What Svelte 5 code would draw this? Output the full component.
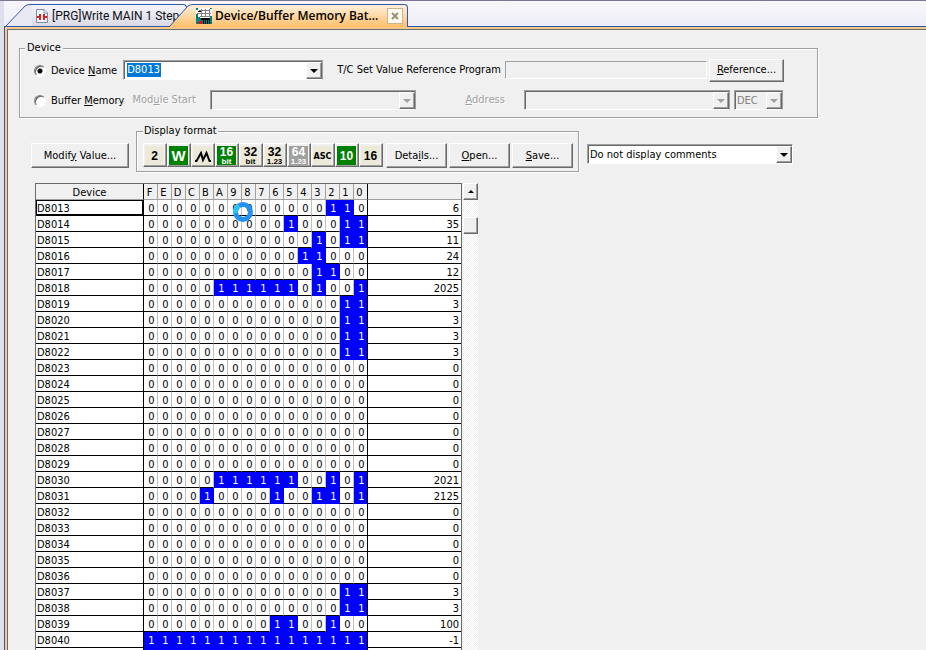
<script>
  const BITS = 'FEDCBA9876543210'.split('');
  const FIRST = 8013;

  const VALUES = [
    6, 35, 11, 24, 12, 2025, 3, 3, 3, 3,
    0, 0, 0, 0, 0, 0, 0, 2021, 2125, 0,
    0, 0, 0, 0, 3, 3, 100, -1,
  ];

  const rows = VALUES.map((value, i) => ({
    name: `D${FIRST + i}`,
    value,
    bits: BITS.map((_, n) => ((value & 0xffff) >> (15 - n)) & 1),
  }));

  const FORMATS = [
    { id: 'bit', top: '2', label: 'Bit' },
    { id: 'word', top: 'W', label: 'Word', on: true },
    { id: 'multi', label: 'Bit and word' },
    { id: 'i16', top: '16', sub: 'bit', label: '16-bit integer', on: true },
    { id: 'i32', top: '32', sub: 'bit', label: '32-bit integer' },
    { id: 'f32', top: '32', sub: '1.23', label: '32-bit real' },
    { id: 'f64', top: '64', sub: '1.23', label: '64-bit real', disabled: true },
    { id: 'asc', top: 'ASC', label: 'ASCII' },
    { id: 'dec', top: '10', label: 'Decimal', on: true },
    { id: 'hex', top: '16', label: 'Hexadecimal' },
  ];

  let target = $state('device');
  let device = $state('D8013');
</script>

<div class="window">
  <nav class="tabs">
    <div class="tab back">
      <svg class="edge" viewBox="0 0 26 22" aria-hidden="true">
        <path d="M0 22L19 2Q21 .5 24 .5H26V22Z" fill="#e9e9f3" />
        <path d="M0 22L19 2Q21 .5 24 .5H26" fill="none" stroke="#2f5aa8" />
      </svg>
      <a class="face" href="#main">
        <svg width="12" height="14" viewBox="0 0 12 14" aria-hidden="true">
          <path d="M.5.5H8L11.500 4V13.500H.5Z" fill="#f2f5fa" stroke="#7d8aa3" />
          <path d="M8 .5V4H11.500" fill="#fff" stroke="#7d8aa3" />
          <path d="M1 8H4M8 8H11M4 5V11M8 5V11" stroke="#d8201c" stroke-width="2" />
        </svg>
        <span>[PRG]Write MAIN 1 Step</span>
      </a>
    </div>
    <div class="tab front">
      <svg class="edge" viewBox="0 0 26 23" aria-hidden="true">
        <defs>
          <linearGradient id="warm" x1="0" y1="0" x2="0" y2="1">
            <stop offset="0" stop-color="#fff0dc" />
            <stop offset="1" stop-color="#ffbf6b" />
          </linearGradient>
        </defs>
        <path d="M0 23L19 2Q21 .5 24 .5H26V23Z" fill="url(#warm)" />
        <path d="M0 23L19 2Q21 .5 24 .5H26" fill="none" stroke="#2f5aa8" />
      </svg>
      <a class="face" href="#batch">
        <svg width="16" height="16" viewBox="0 0 16 16" shape-rendering="crispEdges" aria-hidden="true">
          <rect width="16" height="16" fill="#008080" />
          <path d="M2 0H14V1H16V8H14V10H4V9H2V6H0V2H2Z" fill="#fff" />
          <path d="M3 2H14V3H3ZM1 5H15V6H1ZM4 8H14V9H4ZM5 1H6V9H5ZM9 1H10V9H9ZM13 1H14V9H13Z" fill="#808080" />
          <path d="M2 3H5V4H2ZM5 10H14V12H5ZM7 12H8V16H7ZM9 12H10V16H9ZM11 12H12V16H11ZM13 12H14V16H13Z" fill="#000" />
          <rect x="3" y="13" width="3" height="3" fill="#f00" />
        </svg>
        <span>Device/Buffer Memory Bat...</span>
        <button class="close" aria-label="Close">
          <svg width="8" height="8" viewBox="0 0 8 8" aria-hidden="true">
            <path d="M1 1L7 7M7 1L1 7" stroke="#9c8f78" stroke-width="2" />
          </svg>
        </button>
      </a>
    </div>
  </nav>

  <main>
    <fieldset class="device">
      <legend>Device</legend>
      <div class="line">
        <label class="pick"><input type="radio" name="target" value="device" bind:group={target} /><span>Device <u>N</u>ame</span></label>
        <div class="combo name">
          <input type="text" aria-label="Device name" bind:value={device} class="selected" />
          <button class="drop" aria-label="Show device list"></button>
        </div>
        <label class="prog" for="program">T/C Set Value Reference Program</label>
        <input id="program" class="program" type="text" readonly />
        <button class="btn ref"><span><u>R</u>eference...</span></button>
      </div>
      <div class="line">
        <label class="pick"><input type="radio" name="target" value="buffer" bind:group={target} /><span>Buffer <u>M</u>emory</span></label>
        <label class="off module" for="module">Mod<u>u</u>le Start</label>
        <div class="combo start"><select id="module" disabled></select><span class="drop"></span></div>
        <label class="off address" for="address"><u>A</u>ddress</label>
        <div class="combo addr"><select id="address" disabled></select><span class="drop"></span></div>
        <div class="combo base"><select aria-label="Number base" disabled><option>DEC</option></select><span class="drop"></span></div>
      </div>
    </fieldset>

    <div class="tools">
      <button class="btn modify"><span>Modif<u>y</u> Value...</span></button>
      <fieldset class="format">
        <legend>Display format</legend>
        <div class="formats">
          {#each FORMATS as f (f.id)}
            <button class="fmt {f.id}" class:on={f.on} disabled={f.disabled} aria-label={f.label} aria-pressed={!!f.on}>
              <span class="chip" class:double={f.sub}>
                {#if f.top}
                  <b>{f.top}</b>
                  {#if f.sub}<small>{f.sub}</small>{/if}
                {:else}
                  <svg width="18" height="18" viewBox="0 0 18 18" aria-hidden="true">
                    <path d="M1 14H2.500L7 6L9 13L12.500 6L15.500 14H17" fill="none" stroke="#000" stroke-width="2" />
                  </svg>
                {/if}
              </span>
            </button>
          {/each}
        </div>
        <button class="btn"><span>Deta<u>i</u>ls...</span></button>
        <button class="btn"><span><u>O</u>pen...</span></button>
        <button class="btn"><span><u>S</u>ave...</span></button>
      </fieldset>
      <div class="combo comments">
        <select aria-label="Comments"><option>Do not display comments</option></select>
        <span class="drop"></span>
      </div>
    </div>

    <div class="monitor">
      <table>
        <colgroup>
          <col class="c-name" />
          {#each BITS as b (b)}<col class="c-bit" />{/each}
          <col class="c-value" />
        </colgroup>
        <thead>
          <tr>
            <th class="name">Device</th>
            {#each BITS as b (b)}<th class="digit">{b}</th>{/each}
            <th></th>
          </tr>
        </thead>
        <tbody>
          {#each rows as row, i (row.name)}
            <tr>
              <td class="name" class:current={i === 0}>{row.name}</td>
              {#each row.bits as bit}<td class="bit" class:set={bit}>{bit}</td>{/each}
              <td class="value">{row.value}</td>
            </tr>
          {/each}
          <!-- next row, still scrolling into view -->
          <tr>
            <td class="name"></td>
            {#each BITS as b (b)}<td class="bit set"></td>{/each}
            <td class="value"></td>
          </tr>
        </tbody>
      </table>
      <div class="scroll">
        <button class="up" aria-label="Scroll up"></button>
        <div class="thumb"></div>
      </div>
      <svg class="busy" width="20" height="20" viewBox="0 0 20 20" aria-hidden="true">
        <circle cx="10" cy="10" r="7.500" fill="none" stroke="#2492f4" stroke-width="5" />
        <path d="M2.500 11A7.500 7.500 0 0 1 6 3.600" fill="none" stroke="#2cc5fb" stroke-width="5" />
      </svg>
    </div>
  </main>
</div>

<style>
  :global(body) {
    margin: 0;
    background: #f0f0f0;
  }

  .window {
    box-sizing: border-box;
    height: 100vh;
    overflow: hidden;
    display: flex;
    flex-direction: column;
    padding-left: 4px;
    border-top: 1px solid #7d7593;
    background: #dfe0ec;
    color: #000;
    font: 11px/14px "DejaVu Sans Condensed", "DejaVu Sans", sans-serif;
  }

  button, input, select {
    box-sizing: border-box;
    margin: 0;
    padding: 0;
    border: 0;
    border-radius: 0;
    font: inherit;
    color: inherit;
    background: #f0f0f0;
    appearance: none;
  }

  /* document tabs */
  .tabs {
    flex: none;
    display: flex;
    height: 25px;
    padding: 3px 0 0 2px;
    box-sizing: border-box;
    background: linear-gradient(#f6f6fb, #eeeef6);
    font: 12px/16px "Open Sans", sans-serif;
  }
  .tab {
    display: flex;
    height: 22px;
  }
  .tab .edge {
    flex: none;
    width: 26px;
    height: 100%;
  }
  .face {
    box-sizing: border-box;
    display: flex;
    align-items: center;
    border-top: 1px solid #2f5aa8;
    border-right: 1px solid #2f5aa8;
    border-radius: 0 4px 0 0;
    color: #101018;
    text-decoration: none;
    white-space: nowrap;
  }
  .face svg {
    flex: none;
  }
  .back .face {
    width: 155px;
    padding-left: 4px;
    gap: 4px;
    background: linear-gradient(#f4f4fa, #dadae6);
    font-family: Roboto, sans-serif;
  }
  .front {
    position: relative;
    z-index: 1;
    height: 23px;
    margin-left: -18px;
  }
  .front .face {
    width: 213px;
    padding: 0 4px 0 1px;
    gap: 3px;
    background: linear-gradient(#fff0dc, #ffbf6b);
    color: #000;
    font-weight: 600;
  }
  .close {
    display: grid;
    place-items: center;
    width: 16px;
    height: 16px;
    margin-left: auto;
    border: 1px solid #c9b591;
    background: #fffaf0;
  }

  main {
    flex: 1;
    min-height: 0;
    padding: 14px 12px 0;
    border-top: 1px solid #2f5aa8;
    border-left: 1px solid #2f5aa8;
    box-shadow: inset 2px 2px #fbc88a, inset 3px 3px #6b6b6b;
    background: #f0f0f0;
  }

  fieldset {
    box-sizing: border-box;
    min-width: 0;
    margin: 0;
    border: 1px solid #a0a0a0;
    box-shadow: 1px 1px #fff, inset 1px 1px #fff;
  }
  legend {
    padding: 0 2px;
    background: #f0f0f0;
  }

  .device {
    max-width: 799px;
    height: 77px;
    margin-left: 2px;
    padding: 4px 33px 0 14px;
  }
  .device legend {
    margin-left: -9px;
  }
  .line {
    display: flex;
    align-items: center;
    height: 22px;
    margin-bottom: 8px;
  }
  .pick {
    flex: none;
    display: flex;
    align-items: center;
    gap: 5px;
    padding-top: 1px;
    white-space: nowrap;
  }
  .pick input {
    width: 12px;
    height: 12px;
    border: 1px solid;
    border-color: #808080 #fff #fff #808080;
    border-radius: 50%;
    background: #fff;
    box-shadow: inset 1px 1px #606060;
  }
  .pick input:checked {
    background: radial-gradient(circle, #000 2px, #fff 3px);
  }
  .off {
    color: #a0a0a0;
    text-shadow: 1px 1px #fff;
  }

  .combo {
    box-sizing: border-box;
    flex: none;
    position: relative;
    display: flex;
    height: 20px;
    border: 1px solid;
    border-color: #a0a0a0 #fff #fff #a0a0a0;
    background: #fff;
    box-shadow: inset 1px 1px #696969;
  }
  .combo select, .combo input {
    flex: 1;
    min-width: 0;
    padding: 2px 0 0 2px;
    background: transparent;
    opacity: 1;
  }
  .combo:has(select:disabled) {
    background: #f0f0f0;
    border-color: #a0a0a0;
    border-bottom-color: #fff;
    color: #808080;
  }
  .drop {
    box-sizing: border-box;
    flex: none;
    display: grid;
    place-items: center;
    width: 16px;
    margin-top: 1px;
    border: 1px solid;
    border-color: #fff #696969 #696969 #fff;
    background: #f0f0f0;
    box-shadow: inset -1px -1px #a0a0a0;
  }
  .combo select + .drop {
    position: absolute;
    top: 1px;
    right: 0;
    bottom: 0;
    margin: 0;
    pointer-events: none;
  }
  .drop::after, .up::after {
    content: '';
    border: 4px solid transparent;
    border-top-color: #000;
    border-bottom-width: 0;
  }
  select:disabled + .drop::after {
    border-top-color: #a0a0a0;
  }

  .combo.name {
    width: 200px;
    margin-left: 6px;
    border-right-color: #a0a0a0;
  }
  .combo .selected {
    flex: none;
    width: 34px;
    height: 14px;
    margin: 2px auto 0 3px;
    padding: 0;
    background: #0078d7;
    color: #fff;
  }
  .prog {
    flex: none;
    width: 162px;
    margin: 0 6px 0 14px;
    white-space: nowrap;
  }
  .program {
    flex: 1;
    min-width: 0;
    height: 18px;
    border: 1px solid;
    border-color: #a0a0a0 #fff #fff #a0a0a0;
  }
  .module {
    width: 68px;
    margin: 0 10px 0 8px;
    white-space: nowrap;
  }
  .start {
    width: 206px;
  }
  .address {
    width: 53px;
    margin: 0 6px 0 49px;
  }
  .addr {
    flex: 1;
  }
  .base {
    width: 49px;
    margin: 0 1px 0 4px;
  }

  .btn {
    height: 25px;
    width: 61px;
    border: 1px solid;
    border-color: #fff #696969 #696969 #fff;
    box-shadow: inset -1px -1px #a0a0a0;
    white-space: nowrap;
  }
  .btn.ref {
    flex: none;
    width: 75px;
    height: 23px;
    margin-left: 2px;
  }
  .btn.modify {
    width: 98px;
    margin: 19px 7px 0 0;
  }

  .tools {
    display: flex;
    align-items: flex-start;
    margin: 6px 0 0 14px;
  }
  .format {
    display: flex;
    gap: 2px;
    width: 443px;
    height: 48px;
    padding: 5px 5px 0 6px;
  }
  .format legend {
    padding: 0 1px;
  }
  .formats {
    display: flex;
    margin-right: 1px;
  }
  .fmt {
    width: 24px;
    height: 24px;
    padding: 1px 0 0 1px;
    border: 1px solid;
    border-color: #fff #696969 #696969 #fff;
    box-shadow: inset -1px -1px #a0a0a0;
  }
  .chip {
    display: flex;
    flex-direction: column;
    align-items: center;
    justify-content: center;
    width: 19px;
    height: 19px;
    background: #ece9d8;
    color: #000;
  }
  .on .chip {
    background: #008000;
    color: #fff;
  }
  .fmt:disabled .chip {
    background: #a0a0a0;
    color: #fff;
  }
  .chip b {
    font: bold 12px/12px "Liberation Sans", sans-serif;
  }
  .chip small {
    font: bold 8px/7px "Liberation Sans", sans-serif;
  }
  .word b {
    font-size: 15px;
  }
  .asc b {
    font: bold 9px/12px "DejaVu Sans Condensed", sans-serif;
  }
  .comments {
    width: 206px;
    margin: 20px 0 0 8px;
  }

  /* register monitor */
  .monitor {
    position: relative;
    display: flex;
    width: 443px;
    margin: 11px 0 0 18px;
  }
  table {
    flex: none;
    width: 427px;
    table-layout: fixed;
    border-collapse: separate;
    border-spacing: 0;
    border: 1px solid #696969;
    background: #fff;
  }
  .c-name {
    width: 108px;
  }
  .c-bit {
    width: 14px;
  }
  th, td {
    box-sizing: border-box;
    height: 16px;
    padding: 2px 0 0;
    border-right: 1px solid #c0c0c0;
    border-bottom: 1px solid #000;
    font-weight: normal;
    line-height: 13px;
    text-align: center;
  }
  th {
    border-color: #a0a0a0;
    background: #f0f0f0;
  }
  th.digit {
    padding-right: 2px;
  }
  td.name {
    padding-left: 1px;
    text-align: left;
  }
  td.bit {
    padding-left: 2px;
  }
  td.current {
    box-shadow: inset 0 0 0 1px #000;
  }
  .name, th:nth-last-child(2), td:nth-last-child(2) {
    border-right-color: #000;
  }
  .set {
    border-right-color: #00f;
    border-bottom-color: #00f;
    background: #00f;
    color: #fff;
  }
  td.value {
    padding-right: 2px;
    text-align: right;
  }
  th:last-child, td:last-child {
    border-right: 0;
  }

  .scroll {
    width: 15px;
    margin-left: 1px;
    background: repeating-conic-gradient(#fff 0 25%, #f0f0f0 0 50%) 0 0 / 2px 2px;
  }
  .up, .thumb {
    display: grid;
    place-items: center;
    box-sizing: border-box;
    width: 15px;
    height: 17px;
    border: 1px solid;
    border-color: #fff #696969 #696969 #fff;
    background: #f0f0f0;
    box-shadow: inset -1px -1px #a0a0a0;
  }
  .up::after {
    border-width: 0 3px 3px;
    border-color: transparent transparent #000;
  }
  .thumb {
    margin-top: 17px;
  }
  .busy {
    position: absolute;
    left: 198px;
    top: 19px;
  }
</style>
